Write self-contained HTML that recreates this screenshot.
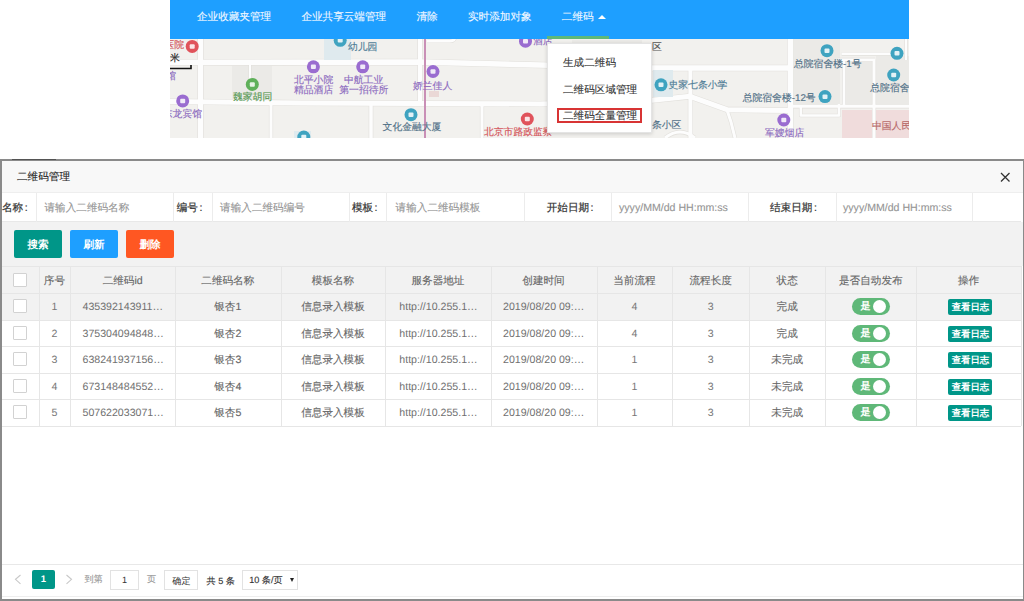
<!DOCTYPE html>
<html><head><meta charset="utf-8">
<style>
*{margin:0;padding:0;box-sizing:border-box}
html,body{width:1024px;height:601px;overflow:hidden;background:#fff;font-family:"Liberation Sans",sans-serif;font-size:10.6px;color:#666;text-rendering:geometricPrecision}
.a{position:absolute}
.t{position:absolute;white-space:nowrap;line-height:12px;-webkit-text-stroke-width:0.12px}
.l{-webkit-text-stroke-width:0;color:#707070}
#map{left:170px;top:0;width:739px;height:138px;background:#f2f1ee;overflow:hidden}
#nav{left:170px;top:0;width:739px;height:39px;background:#1E9FFF}
#nav .t{color:#f2f8ff}
#dd{left:547px;top:43px;width:105px;height:90px;background:#fff;box-shadow:0 1px 4px rgba(0,0,0,.16);border:1px solid #e4e4e4}
#dd .t{left:15px;color:#333}
#modal{left:0;top:159px;width:1024px;height:442px;background:#fff;border:2px solid #8a8a8a;border-right-width:1px}
.vl{position:absolute;width:1px;background:#e6e6e6}
.hl{position:absolute;height:1px;background:#e6e6e6}
.cb{position:absolute;width:14px;height:14px;border:1px solid #d2d2d2;background:#fff;border-radius:1px}
.btn{position:absolute;height:28px;width:48px;border-radius:2px;color:#fff;text-align:center;line-height:31px;font-size:10.6px;font-weight:bold}
.sw{position:absolute;width:38px;height:17px;border-radius:9px;background:#5FB878}
.sw i{position:absolute;left:21px;top:2px;width:13px;height:13px;border-radius:50%;background:#fff}
.sw b{position:absolute;left:8px;top:2px;font-weight:bold;color:#fff;font-size:10px;line-height:13px}
.log{position:absolute;width:44px;height:16px;background:#009688;color:#fff;border-radius:2px;text-align:center;line-height:16px;font-size:9.4px;font-weight:bold}
</style></head><body>

<div id="map" class="a">
<svg width="739" height="138" viewBox="170 0 739 138" style="position:absolute;left:0;top:0">
<rect x="794" y="39" width="46" height="66" fill="#ebeae7"/>
<rect x="846" y="62" width="27" height="43" fill="#ebeae7"/>
<rect x="876" y="56" width="33" height="49" fill="#ebeae7"/>
<rect x="572" y="40" width="70" height="25" fill="#ebeae7"/>
<rect x="232" y="66" width="40" height="33" fill="#ebeae7"/>
<path d="M170 62.5 L420 62 L540 65 L650 68 L790 68" stroke="#e2e0dc" stroke-width="6.7" fill="none" stroke-linejoin="round"/>
<path d="M170 101.5 L300 103 L420 103.5 L540 104 L650 100.5 L690 96.3 L727 109.7 L790 110.5" stroke="#e2e0dc" stroke-width="6.2" fill="none" stroke-linejoin="round"/>
<path d="M790 106.3 L909 106.3" stroke="#e2e0dc" stroke-width="4.2" fill="none" stroke-linejoin="round"/>
<path d="M200.5 38 L200.5 138" stroke="#e2e0dc" stroke-width="6.2" fill="none" stroke-linejoin="round"/>
<path d="M250 64 L250 84" stroke="#e2e0dc" stroke-width="3.2" fill="none" stroke-linejoin="round"/>
<path d="M271 103 L271 138" stroke="#e2e0dc" stroke-width="4.2" fill="none" stroke-linejoin="round"/>
<path d="M371 104 L371 138" stroke="#e2e0dc" stroke-width="4.7" fill="none" stroke-linejoin="round"/>
<path d="M420 38 L420 104" stroke="#e2e0dc" stroke-width="5.2" fill="none" stroke-linejoin="round"/>
<path d="M482 104 L482 138" stroke="#e2e0dc" stroke-width="4.2" fill="none" stroke-linejoin="round"/>
<path d="M690.4 68 L690.4 138" stroke="#e2e0dc" stroke-width="5.2" fill="none" stroke-linejoin="round"/>
<path d="M727 110 L731 122 L735 138" stroke="#e2e0dc" stroke-width="4.2" fill="none" stroke-linejoin="round"/>
<path d="M790.4 38 L790.4 138" stroke="#e2e0dc" stroke-width="6.7" fill="none" stroke-linejoin="round"/>
<path d="M844 60 L844 107" stroke="#e2e0dc" stroke-width="3.7" fill="none" stroke-linejoin="round"/>
<path d="M874 60 L874 138" stroke="#e2e0dc" stroke-width="4.2" fill="none" stroke-linejoin="round"/>
<path d="M841.6 53.8 L895 53.8" stroke="#e2e0dc" stroke-width="3.7" fill="none" stroke-linejoin="round"/>
<path d="M838 59.7 L875 59.7" stroke="#e2e0dc" stroke-width="3.7" fill="none" stroke-linejoin="round"/>
<path d="M800.8 106 L800.8 115.5 L839 115.5 L839 104" stroke="#e2e0dc" stroke-width="3.7" fill="none" stroke-linejoin="round"/>
<path d="M906 38 L906 60" stroke="#e2e0dc" stroke-width="3.2" fill="none" stroke-linejoin="round"/>
<path d="M665 138 Q680 126 695 138" stroke="#e2e0dc" stroke-width="4.2" fill="none" stroke-linejoin="round"/>
<path d="M427 41 L450 41 Q455 41 455 36" stroke="#e2e0dc" stroke-width="4.2" fill="none" stroke-linejoin="round"/>
<path d="M170 62.5 L420 62 L540 65 L650 68 L790 68" stroke="#fdfdfd" stroke-width="5.5" fill="none" stroke-linejoin="round"/>
<path d="M170 101.5 L300 103 L420 103.5 L540 104 L650 100.5 L690 96.3 L727 109.7 L790 110.5" stroke="#fdfdfd" stroke-width="5" fill="none" stroke-linejoin="round"/>
<path d="M790 106.3 L909 106.3" stroke="#fdfdfd" stroke-width="3" fill="none" stroke-linejoin="round"/>
<path d="M200.5 38 L200.5 138" stroke="#fdfdfd" stroke-width="5" fill="none" stroke-linejoin="round"/>
<path d="M250 64 L250 84" stroke="#fdfdfd" stroke-width="2" fill="none" stroke-linejoin="round"/>
<path d="M271 103 L271 138" stroke="#fdfdfd" stroke-width="3" fill="none" stroke-linejoin="round"/>
<path d="M371 104 L371 138" stroke="#fdfdfd" stroke-width="3.5" fill="none" stroke-linejoin="round"/>
<path d="M420 38 L420 104" stroke="#fdfdfd" stroke-width="4" fill="none" stroke-linejoin="round"/>
<path d="M482 104 L482 138" stroke="#fdfdfd" stroke-width="3" fill="none" stroke-linejoin="round"/>
<path d="M690.4 68 L690.4 138" stroke="#fdfdfd" stroke-width="4" fill="none" stroke-linejoin="round"/>
<path d="M727 110 L731 122 L735 138" stroke="#fdfdfd" stroke-width="3" fill="none" stroke-linejoin="round"/>
<path d="M790.4 38 L790.4 138" stroke="#fdfdfd" stroke-width="5.5" fill="none" stroke-linejoin="round"/>
<path d="M844 60 L844 107" stroke="#fdfdfd" stroke-width="2.5" fill="none" stroke-linejoin="round"/>
<path d="M874 60 L874 138" stroke="#fdfdfd" stroke-width="3" fill="none" stroke-linejoin="round"/>
<path d="M841.6 53.8 L895 53.8" stroke="#fdfdfd" stroke-width="2.5" fill="none" stroke-linejoin="round"/>
<path d="M838 59.7 L875 59.7" stroke="#fdfdfd" stroke-width="2.5" fill="none" stroke-linejoin="round"/>
<path d="M800.8 106 L800.8 115.5 L839 115.5 L839 104" stroke="#fdfdfd" stroke-width="2.5" fill="none" stroke-linejoin="round"/>
<path d="M906 38 L906 60" stroke="#fdfdfd" stroke-width="2" fill="none" stroke-linejoin="round"/>
<path d="M665 138 Q680 126 695 138" stroke="#fdfdfd" stroke-width="3" fill="none" stroke-linejoin="round"/>
<path d="M427 41 L450 41 Q455 41 455 36" stroke="#fdfdfd" stroke-width="3" fill="none" stroke-linejoin="round"/>
<rect x="324" y="39" width="27" height="21" fill="#dfeaee"/>
<rect x="653" y="70" width="20" height="27" fill="#dfeaee"/>
<rect x="294" y="131" width="17" height="7" fill="#dfeaee"/>
<rect x="842" y="110" width="30" height="28" fill="#f0dcdc"/>
<rect x="876" y="110" width="33" height="28" fill="#f0dcdc"/>
<rect x="429" y="91" width="10" height="6" fill="#ead8d6"/>
<path d="M425 38 L425 138" stroke="#c98fb6" stroke-width="2" fill="none"/>
<path d="M170 68.5 L191 68.5 L191 65" stroke="#111" stroke-width="1.6" fill="none"/>
<circle cx="192.2" cy="46.4" r="6.5" fill="#e0535b"/><rect x="189.7" y="44.2" width="5" height="4.5" rx="1" fill="#fff" opacity=".85"/>
<circle cx="182.7" cy="100.9" r="6.5" fill="#9a6cd0"/><rect x="180.2" y="98.7" width="5" height="4.5" rx="1" fill="#fff" opacity=".85"/>
<circle cx="252.3" cy="84.4" r="6.5" fill="#5fb05a"/><rect x="249.8" y="82.2" width="5" height="4.5" rx="1" fill="#fff" opacity=".85"/>
<circle cx="340.2" cy="40.3" r="6.5" fill="#3fa3c0"/><rect x="337.7" y="38.1" width="5" height="4.5" rx="1" fill="#fff" opacity=".85"/>
<circle cx="313.4" cy="66.8" r="6.5" fill="#9a6cd0"/><rect x="310.9" y="64.6" width="5" height="4.5" rx="1" fill="#fff" opacity=".85"/>
<circle cx="362.7" cy="66.8" r="6.5" fill="#9a6cd0"/><rect x="360.2" y="64.6" width="5" height="4.5" rx="1" fill="#fff" opacity=".85"/>
<circle cx="411" cy="114.7" r="6.5" fill="#3fa3c0"/><rect x="408.5" y="112.5" width="5" height="4.5" rx="1" fill="#fff" opacity=".85"/>
<circle cx="303.8" cy="137" r="6.5" fill="#3fa3c0"/><rect x="301.3" y="134.8" width="5" height="4.5" rx="1" fill="#fff" opacity=".85"/>
<circle cx="433" cy="71.5" r="6.5" fill="#9a6cd0"/><rect x="430.5" y="69.3" width="5" height="4.5" rx="1" fill="#fff" opacity=".85"/>
<circle cx="527.3" cy="119" r="6.5" fill="#e0535b"/><rect x="524.8" y="116.8" width="5" height="4.5" rx="1" fill="#fff" opacity=".85"/>
<circle cx="525.5" cy="41.2" r="6.5" fill="#9a6cd0"/><rect x="523.0" y="39.0" width="5" height="4.5" rx="1" fill="#fff" opacity=".85"/>
<circle cx="661" cy="84.8" r="6.5" fill="#3fa3c0"/><rect x="658.5" y="82.6" width="5" height="4.5" rx="1" fill="#fff" opacity=".85"/>
<circle cx="827" cy="50.7" r="6.5" fill="#3fa3c0"/><rect x="824.5" y="48.5" width="5" height="4.5" rx="1" fill="#fff" opacity=".85"/>
<circle cx="825" cy="96.6" r="6.5" fill="#3fa3c0"/><rect x="822.5" y="94.4" width="5" height="4.5" rx="1" fill="#fff" opacity=".85"/>
<circle cx="893.7" cy="75" r="6.5" fill="#3fa3c0"/><rect x="891.2" y="72.8" width="5" height="4.5" rx="1" fill="#fff" opacity=".85"/>
<circle cx="897" cy="53.3" r="6.5" fill="#3fa3c0"/><rect x="894.5" y="51.1" width="5" height="4.5" rx="1" fill="#fff" opacity=".85"/>
<circle cx="783.8" cy="120" r="6.5" fill="#9a6cd0"/><rect x="781.3" y="117.8" width="5" height="4.5" rx="1" fill="#fff" opacity=".85"/>
</svg>
<span class="t" style="left:-5.6px;top:40.0px;color:#d4545a;font-size:9.8px;-webkit-text-stroke:0.15px #d4545a">医院</span>
<span class="t" style="left:0.0px;top:53.0px;color:#222;font-size:9.8px;-webkit-text-stroke:0.15px #222">米</span>
<span class="t" style="left:-3.8px;top:71.0px;color:#8d6bbf;font-size:9.8px;-webkit-text-stroke:0.15px #8d6bbf">馆</span>
<span class="t" style="left:-7.2px;top:109.0px;color:#8d6bbf;font-size:9.8px;-webkit-text-stroke:0.15px #8d6bbf">东龙宾馆</span>
<span class="t" style="left:63.0px;top:92.0px;color:#5a9a55;font-size:9.8px;-webkit-text-stroke:0.15px #5a9a55">魏家胡同</span>
<span class="t" style="left:178.0px;top:42.0px;color:#4f7d96;font-size:9.8px;-webkit-text-stroke:0.15px #4f7d96">幼儿园</span>
<span class="t" style="left:124.0px;top:74.8px;color:#8d6bbf;font-size:9.8px;-webkit-text-stroke:0.15px #8d6bbf">北平小院</span>
<span class="t" style="left:124.0px;top:85.2px;color:#8d6bbf;font-size:9.8px;-webkit-text-stroke:0.15px #8d6bbf">精品酒店</span>
<span class="t" style="left:174.0px;top:74.8px;color:#8d6bbf;font-size:9.8px;-webkit-text-stroke:0.15px #8d6bbf">中航工业</span>
<span class="t" style="left:169.3px;top:85.2px;color:#8d6bbf;font-size:9.8px;-webkit-text-stroke:0.15px #8d6bbf">第一招待所</span>
<span class="t" style="left:212.6px;top:122.4px;color:#4f6f86;font-size:9.8px;-webkit-text-stroke:0.15px #4f6f86">文化金融大厦</span>
<span class="t" style="left:243.0px;top:80.8px;color:#8d6bbf;font-size:9.8px;-webkit-text-stroke:0.15px #8d6bbf">娇兰佳人</span>
<span class="t" style="left:314.0px;top:126.7px;color:#d4545a;font-size:9.8px;-webkit-text-stroke:0.15px #d4545a">北京市路政监察</span>
<span class="t" style="left:482.0px;top:42.0px;color:#555;font-size:9.8px;-webkit-text-stroke:0.15px #555">区</span>
<span class="t" style="left:498.5px;top:80.3px;color:#4f7d96;font-size:9.8px;-webkit-text-stroke:0.15px #4f7d96">史家七条小学</span>
<span class="t" style="left:482.0px;top:119.8px;color:#4f6f86;font-size:9.8px;-webkit-text-stroke:0.15px #4f6f86">条小区</span>
<span class="t" style="left:624.0px;top:59.2px;color:#4f6f86;font-size:9.8px;-webkit-text-stroke:0.15px #4f6f86">总院宿舍楼-1号</span>
<span class="t" style="left:572.7px;top:93.0px;color:#4f6f86;font-size:9.8px;-webkit-text-stroke:0.15px #4f6f86">总院宿舍楼-12号</span>
<span class="t" style="left:700.3px;top:83.4px;color:#4f6f86;font-size:9.8px;-webkit-text-stroke:0.15px #4f6f86">总院宿舍</span>
<span class="t" style="left:595.0px;top:127.6px;color:#8d6bbf;font-size:9.8px;-webkit-text-stroke:0.15px #8d6bbf">军嫂烟店</span>
<span class="t" style="left:702.0px;top:120.6px;color:#b86a6a;font-size:9.8px;-webkit-text-stroke:0.15px #b86a6a">中国人民</span>
<span class="t" style="left:363.0px;top:36.0px;color:#8d6bbf;font-size:9.8px;-webkit-text-stroke:0.15px #8d6bbf">酒店</span>
</div>
<div id="nav" class="a">
<span class="t" style="left:27.0px;top:11px">企业收藏夹管理</span>
<span class="t" style="left:131.4px;top:11px">企业共享云端管理</span>
<span class="t" style="left:246.5px;top:11px">清除</span>
<span class="t" style="left:298.0px;top:11px">实时添加对象</span>
<span class="t" style="left:391.8px;top:11px">二维码</span>
<div class="a" style="left:428px;top:14.5px;width:0;height:0;border-left:4px solid transparent;border-right:4px solid transparent;border-bottom:4.5px solid #fff"></div>
<div class="a" style="left:377px;top:36px;width:62px;height:3px;background:#5FB878"></div>
</div>
<div id="dd" class="a">
<span class="t" style="top:13.0px">生成二维码</span>
<span class="t" style="top:40.0px">二维码区域管理</span>
<span class="t" style="top:66.4px">二维码全量管理</span>
<div class="a" style="left:8.5px;top:63.5px;width:85.5px;height:15.5px;border:2px solid #d83434"></div>
</div>
<div id="modal" class="a"></div>
<div class="a" style="left:12px;top:159px;width:44px;height:1px;background:#3c3c3c;opacity:.7"></div>
<div class="a" style="left:2px;top:161px;width:1021px;height:32px;background:#f8f8f8;border-bottom:1px solid #eee"></div>
<span class="t" style="left:17px;top:170.5px;color:#222">二维码管理</span>
<svg class="a" style="left:999px;top:171px" width="13" height="13" viewBox="0 0 13 13"><path d="M2 2 L10.5 10.5 M10.5 2 L2 10.5" stroke="#333" stroke-width="1.3"/></svg>
<div class="a" style="left:2px;top:193px;width:1019px;height:29px;background:#fff;border-bottom:1px solid #e8e8e8"></div>
<div class="vl" style="left:36.3px;top:193px;height:29px;background:#ececec"></div>
<div class="vl" style="left:173.0px;top:193px;height:29px;background:#ececec"></div>
<div class="vl" style="left:212.3px;top:193px;height:29px;background:#ececec"></div>
<div class="vl" style="left:348.8px;top:193px;height:29px;background:#ececec"></div>
<div class="vl" style="left:386.0px;top:193px;height:29px;background:#ececec"></div>
<div class="vl" style="left:523.8px;top:193px;height:29px;background:#ececec"></div>
<div class="vl" style="left:611.4px;top:193px;height:29px;background:#ececec"></div>
<div class="vl" style="left:747.8px;top:193px;height:29px;background:#ececec"></div>
<div class="vl" style="left:835.7px;top:193px;height:29px;background:#ececec"></div>
<div class="vl" style="left:971.6px;top:193px;height:29px;background:#ececec"></div>
<span class="t" style="left:2.0px;top:201.7px;color:#333;-webkit-text-stroke:0.2px #333">名称<i style="margin-left:1.5px;font-style:normal">:</i></span>
<span class="t" style="left:176.7px;top:201.7px;color:#333;-webkit-text-stroke:0.2px #333">编号<i style="margin-left:1.5px;font-style:normal">:</i></span>
<span class="t" style="left:351.9px;top:201.7px;color:#333;-webkit-text-stroke:0.2px #333">模板<i style="margin-left:1.5px;font-style:normal">:</i></span>
<span class="t" style="left:546.7px;top:201.7px;color:#333;-webkit-text-stroke:0.2px #333">开始日期<i style="margin-left:1.5px;font-style:normal">:</i></span>
<span class="t" style="left:770.0px;top:201.7px;color:#333;-webkit-text-stroke:0.2px #333">结束日期<i style="margin-left:1.5px;font-style:normal">:</i></span>
<span class="t" style="left:44.5px;top:201.5px;color:#959595">请输入二维码名称</span>
<span class="t" style="left:220.1px;top:201.5px;color:#959595">请输入二维码编号</span>
<span class="t" style="left:395.6px;top:201.5px;color:#959595">请输入二维码模板</span>
<span class="t" style="left:619.0px;top:201.5px;color:#959595">yyyy/MM/dd HH:mm:ss</span>
<span class="t" style="left:843.0px;top:201.5px;color:#959595">yyyy/MM/dd HH:mm:ss</span>
<div class="a" style="left:2px;top:222px;width:1021px;height:44px;background:#f2f2f2"></div>
<div class="btn" style="left:14px;top:230px;background:#009688">搜索</div>
<div class="btn" style="left:70px;top:230px;background:#1E9FFF">刷新</div>
<div class="btn" style="left:126px;top:230px;background:#FF5722">删除</div>
<div class="a" style="left:2px;top:266px;width:1019px;height:27px;background:#f2f2f2"></div>
<div class="a" style="left:2px;top:293px;width:1019px;height:26.5px;background:#f2f2f2"></div>
<div class="hl" style="left:2px;top:266.0px;width:1019px"></div>
<div class="hl" style="left:2px;top:293.0px;width:1019px"></div>
<div class="hl" style="left:2px;top:319.5px;width:1019px"></div>
<div class="hl" style="left:2px;top:346.0px;width:1019px"></div>
<div class="hl" style="left:2px;top:372.5px;width:1019px"></div>
<div class="hl" style="left:2px;top:399.0px;width:1019px"></div>
<div class="hl" style="left:2px;top:425.5px;width:1019px"></div>
<div class="vl" style="left:38.5px;top:266px;height:160px"></div>
<div class="vl" style="left:70.3px;top:266px;height:160px"></div>
<div class="vl" style="left:175.0px;top:266px;height:160px"></div>
<div class="vl" style="left:280.6px;top:266px;height:160px"></div>
<div class="vl" style="left:385.4px;top:266px;height:160px"></div>
<div class="vl" style="left:490.5px;top:266px;height:160px"></div>
<div class="vl" style="left:596.5px;top:266px;height:160px"></div>
<div class="vl" style="left:672.4px;top:266px;height:160px"></div>
<div class="vl" style="left:749.0px;top:266px;height:160px"></div>
<div class="vl" style="left:825.4px;top:266px;height:160px"></div>
<div class="vl" style="left:916.2px;top:266px;height:160px"></div>
<div class="vl" style="left:1021.0px;top:266px;height:160px"></div>
<span class="t" style="left:38.5px;width:31.8px;top:274.5px;text-align:center;color:#666">序号</span>
<span class="t" style="left:70.3px;width:104.7px;top:274.5px;text-align:center;color:#666">二维码id</span>
<span class="t" style="left:175.0px;width:105.6px;top:274.5px;text-align:center;color:#666">二维码名称</span>
<span class="t" style="left:280.6px;width:104.8px;top:274.5px;text-align:center;color:#666">模板名称</span>
<span class="t" style="left:385.4px;width:105.1px;top:274.5px;text-align:center;color:#666">服务器地址</span>
<span class="t" style="left:490.5px;width:106.0px;top:274.5px;text-align:center;color:#666">创建时间</span>
<span class="t" style="left:596.5px;width:75.9px;top:274.5px;text-align:center;color:#666">当前流程</span>
<span class="t" style="left:672.4px;width:76.6px;top:274.5px;text-align:center;color:#666">流程长度</span>
<span class="t" style="left:749.0px;width:76.4px;top:274.5px;text-align:center;color:#666">状态</span>
<span class="t" style="left:825.4px;width:90.8px;top:274.5px;text-align:center;color:#666">是否自动发布</span>
<span class="t" style="left:916.2px;width:104.8px;top:274.5px;text-align:center;color:#666">操作</span>
<div class="cb" style="left:13px;top:273px"></div>
<div class="cb" style="left:13px;top:299.2px"></div>
<span class="t" style="left:38.5px;width:31.8px;top:301.2px;text-align:center;color:#777;-webkit-text-stroke-width:0">1</span>
<span class="t l" style="left:82.5px;top:301.2px">435392143911…</span>
<span class="t" style="left:175.0px;width:105.6px;top:301.2px;text-align:center;color:#666">银杏1</span>
<span class="t" style="left:280.6px;width:104.8px;top:301.2px;text-align:center;color:#666">信息录入模板</span>
<span class="t l" style="left:399.3px;top:301.2px">http://10.255.1…</span>
<span class="t l" style="left:503px;top:301.2px">2019/08/20 09:…</span>
<span class="t" style="left:596.5px;width:75.9px;top:301.2px;text-align:center;color:#777;-webkit-text-stroke-width:0">4</span>
<span class="t" style="left:672.4px;width:76.6px;top:301.2px;text-align:center;color:#777;-webkit-text-stroke-width:0">3</span>
<span class="t" style="left:749.0px;width:76.4px;top:301.2px;text-align:center;color:#666">完成</span>
<div class="sw" style="left:852.4px;top:298.4px"><b>是</b><i></i></div>
<div class="log" style="left:948.4px;top:299.1px">查看日志</div>
<div class="cb" style="left:13px;top:325.8px"></div>
<span class="t" style="left:38.5px;width:31.8px;top:327.8px;text-align:center;color:#777;-webkit-text-stroke-width:0">2</span>
<span class="t l" style="left:82.5px;top:327.8px">375304094848…</span>
<span class="t" style="left:175.0px;width:105.6px;top:327.8px;text-align:center;color:#666">银杏2</span>
<span class="t" style="left:280.6px;width:104.8px;top:327.8px;text-align:center;color:#666">信息录入模板</span>
<span class="t l" style="left:399.3px;top:327.8px">http://10.255.1…</span>
<span class="t l" style="left:503px;top:327.8px">2019/08/20 09:…</span>
<span class="t" style="left:596.5px;width:75.9px;top:327.8px;text-align:center;color:#777;-webkit-text-stroke-width:0">4</span>
<span class="t" style="left:672.4px;width:76.6px;top:327.8px;text-align:center;color:#777;-webkit-text-stroke-width:0">3</span>
<span class="t" style="left:749.0px;width:76.4px;top:327.8px;text-align:center;color:#666">完成</span>
<div class="sw" style="left:852.4px;top:324.9px"><b>是</b><i></i></div>
<div class="log" style="left:948.4px;top:325.6px">查看日志</div>
<div class="cb" style="left:13px;top:352.2px"></div>
<span class="t" style="left:38.5px;width:31.8px;top:354.2px;text-align:center;color:#777;-webkit-text-stroke-width:0">3</span>
<span class="t l" style="left:82.5px;top:354.2px">638241937156…</span>
<span class="t" style="left:175.0px;width:105.6px;top:354.2px;text-align:center;color:#666">银杏3</span>
<span class="t" style="left:280.6px;width:104.8px;top:354.2px;text-align:center;color:#666">信息录入模板</span>
<span class="t l" style="left:399.3px;top:354.2px">http://10.255.1…</span>
<span class="t l" style="left:503px;top:354.2px">2019/08/20 09:…</span>
<span class="t" style="left:596.5px;width:75.9px;top:354.2px;text-align:center;color:#777;-webkit-text-stroke-width:0">1</span>
<span class="t" style="left:672.4px;width:76.6px;top:354.2px;text-align:center;color:#777;-webkit-text-stroke-width:0">3</span>
<span class="t" style="left:749.0px;width:76.4px;top:354.2px;text-align:center;color:#666">未完成</span>
<div class="sw" style="left:852.4px;top:351.4px"><b>是</b><i></i></div>
<div class="log" style="left:948.4px;top:352.1px">查看日志</div>
<div class="cb" style="left:13px;top:378.8px"></div>
<span class="t" style="left:38.5px;width:31.8px;top:380.8px;text-align:center;color:#777;-webkit-text-stroke-width:0">4</span>
<span class="t l" style="left:82.5px;top:380.8px">673148484552…</span>
<span class="t" style="left:175.0px;width:105.6px;top:380.8px;text-align:center;color:#666">银杏4</span>
<span class="t" style="left:280.6px;width:104.8px;top:380.8px;text-align:center;color:#666">信息录入模板</span>
<span class="t l" style="left:399.3px;top:380.8px">http://10.255.1…</span>
<span class="t l" style="left:503px;top:380.8px">2019/08/20 09:…</span>
<span class="t" style="left:596.5px;width:75.9px;top:380.8px;text-align:center;color:#777;-webkit-text-stroke-width:0">1</span>
<span class="t" style="left:672.4px;width:76.6px;top:380.8px;text-align:center;color:#777;-webkit-text-stroke-width:0">3</span>
<span class="t" style="left:749.0px;width:76.4px;top:380.8px;text-align:center;color:#666">未完成</span>
<div class="sw" style="left:852.4px;top:377.9px"><b>是</b><i></i></div>
<div class="log" style="left:948.4px;top:378.6px">查看日志</div>
<div class="cb" style="left:13px;top:405.2px"></div>
<span class="t" style="left:38.5px;width:31.8px;top:407.2px;text-align:center;color:#777;-webkit-text-stroke-width:0">5</span>
<span class="t l" style="left:82.5px;top:407.2px">507622033071…</span>
<span class="t" style="left:175.0px;width:105.6px;top:407.2px;text-align:center;color:#666">银杏5</span>
<span class="t" style="left:280.6px;width:104.8px;top:407.2px;text-align:center;color:#666">信息录入模板</span>
<span class="t l" style="left:399.3px;top:407.2px">http://10.255.1…</span>
<span class="t l" style="left:503px;top:407.2px">2019/08/20 09:…</span>
<span class="t" style="left:596.5px;width:75.9px;top:407.2px;text-align:center;color:#777;-webkit-text-stroke-width:0">1</span>
<span class="t" style="left:672.4px;width:76.6px;top:407.2px;text-align:center;color:#777;-webkit-text-stroke-width:0">3</span>
<span class="t" style="left:749.0px;width:76.4px;top:407.2px;text-align:center;color:#666">未完成</span>
<div class="sw" style="left:852.4px;top:404.4px"><b>是</b><i></i></div>
<div class="log" style="left:948.4px;top:405.1px">查看日志</div>
<div class="hl" style="left:2px;top:564px;width:1021px;background:#e8e8e8"></div>
<svg class="a" style="left:13px;top:574px" width="10" height="11" viewBox="0 0 10 11"><path d="M7.5 1 L2.5 5.3 L7.5 9.8" stroke="#c8c8c8" stroke-width="1.1" fill="none"/></svg>
<div class="a" style="left:32px;top:570px;width:23px;height:19px;background:#009688;border-radius:2px;color:#fff;text-align:center;line-height:19px;font-weight:bold;font-size:9.5px">1</div>
<svg class="a" style="left:64px;top:574px" width="10" height="11" viewBox="0 0 10 11"><path d="M2.5 1 L7.5 5.3 L2.5 9.8" stroke="#c8c8c8" stroke-width="1.1" fill="none"/></svg>
<span class="t" style="left:84.4px;top:572.5px;color:#999;font-size:9.1px;">到第</span>
<div class="a" style="left:110px;top:570px;width:29px;height:19.5px;border:1px solid #e2e2e2;color:#333;text-align:center;line-height:18px;font-size:9.1px;">1</div>
<span class="t" style="left:147px;top:572.5px;color:#999;font-size:9.1px;">页</span>
<div class="a" style="left:164.4px;top:570px;width:34px;height:19.5px;border:1px solid #e2e2e2;color:#333;text-align:center;line-height:20px;font-size:9.1px;">确定</div>
<span class="t" style="left:206.6px;top:574.5px;color:#333;font-size:9.1px;">共 5 条</span>
<div class="a" style="left:242.2px;top:570px;width:56.2px;height:19.5px;border:1px solid #e2e2e2"></div>
<span class="t" style="left:249.2px;top:574px;color:#333;font-size:9.1px;">10 条/页</span>
<div class="a" style="left:289.5px;top:577.5px;width:0;height:0;border-left:2.2px solid transparent;border-right:2.2px solid transparent;border-top:4.5px solid #222"></div>
<div class="hl" style="left:2px;top:596px;width:1021px;background:#eee"></div>
</body></html>
